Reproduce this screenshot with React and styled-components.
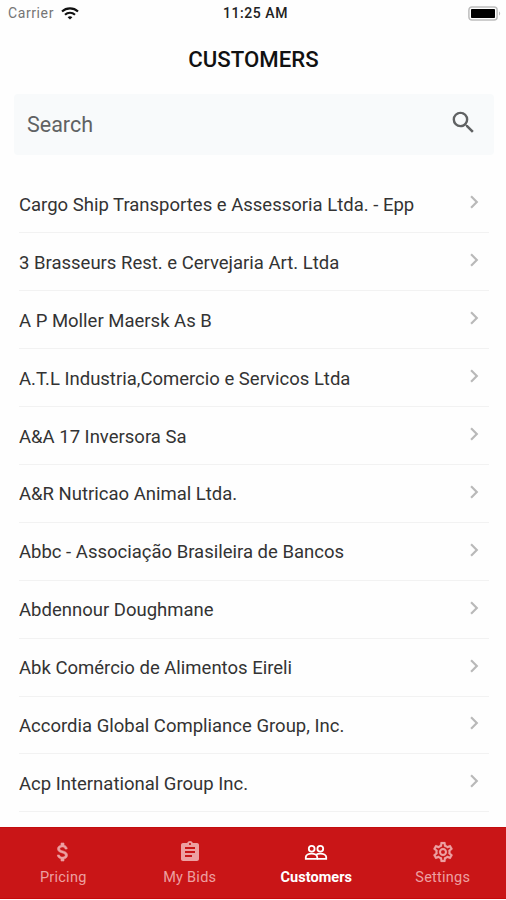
import {useState} from 'react';
import styled, {createGlobalStyle} from 'styled-components';
import {
    MdAssignment,
    MdAttachMoney,
    MdChevronRight,
    MdOutlineSettings,
    MdSearch
} from 'react-icons/md';


const GlobalStyle = createGlobalStyle`
    * {
        box-sizing: border-box;
    }

    body {
        margin: 0;
        background: #fff;
        font-family: Roboto, "Liberation Sans", sans-serif;
    }
`;

const Screen = styled.div`
    display: flex;
    flex-direction: column;
    height: 900px;
    overflow: hidden;
    background: #fefefe;
`;

const StatusBar = styled.div`
    display: grid;
    grid-template-columns: 1fr auto 1fr;
    align-items: center;
    height: 26px;
    padding: 0 5px 0 8px;
    font-size: 14px;
`;

const Carrier = styled.div`
    display: flex;
    align-items: center;
    gap: 7px;
    color: #757575;
    letter-spacing: 0.6px;
`;

const Clock = styled.div`
    color: #222;
    font-weight: 500;
    letter-spacing: 0.55px;
    padding-left: 2px;
`;

const BatteryIcon = styled.svg`
    justify-self: end;
`;

const Title = styled.h1`
    margin: 0;
    height: 68px;
    padding-left: 1px;
    line-height: 67px;
    text-align: center;
    font-size: 22.2px;
    font-weight: 500;
    color: #111;
`;

const SearchBox = styled.label`
    display: flex;
    align-items: center;
    height: 61px;
    margin: 0 12px 0 14px;
    padding: 0 16px 0 13px;
    border-radius: 4px;
    background: #f8fafb;
    color: #606263;

    svg {
        margin-top: -5px;
    }
`;

const SearchInput = styled.input`
    flex: 1;
    min-width: 0;
    padding: 0;
    border: 0;
    outline: 0;
    background: transparent;
    font: 400 21.5px Roboto, sans-serif;
    color: #333;

    &::placeholder {
        color: #606263;
        opacity: 1;
    }
`;

const List = styled.ul`
    flex: 1;
    min-height: 0;
    margin: 0 17px 0 19px;
    padding: 20.5px 0 0;
    list-style: none;
    overflow: hidden;
`;

const CustomerRow = styled.li`
    display: flex;
    align-items: center;
    justify-content: space-between;
    height: 57.9px;
    padding: 2px 2px 0 0;
    border-bottom: 1px solid #f2f2f2;
    font-size: 18.5px;
    color: #333;
    white-space: nowrap;

    svg {
        margin-top: -5px;
        color: #b9b9b9;
    }
`;

const TabBar = styled.nav`
    display: grid;
    grid-template-columns: repeat(4, 1fr);
    height: 72px;
    border-top: 1px solid #c30d0e;
    border-bottom: 1px solid #c8090a;
    margin-bottom: 1px;
    background: #c91517;
`;

const Tab = styled.button`
    display: flex;
    flex-direction: column;
    align-items: center;
    gap: 4px;
    padding: 12px 0 0;
    border: 0;
    background: transparent;
    color: ${({$active}) => ($active ? '#fff' : '#eda0a1')};
    font: ${({$active}) => ($active ? 700 : 400)} 14.5px/20px Roboto, sans-serif;
    letter-spacing: ${({$active}) => ($active ? 0.05 : 0.25)}px;

    path[fill="none"] {
        stroke: none;
    }
`;

const customers = [
    'Cargo Ship Transportes e Assessoria Ltda. - Epp',
    '3 Brasseurs Rest. e Cervejaria Art. Ltda',
    'A P Moller Maersk As B',
    'A.T.L Industria,Comercio e Servicos Ltda',
    'A&A 17 Inversora Sa',
    'A&R Nutricao Animal Ltda.',
    'Abbc - Associação Brasileira de Bancos',
    'Abdennour Doughmane',
    'Abk Comércio de Alimentos Eireli',
    'Accordia Global Compliance Group, Inc.',
    'Acp International Group Inc.'
];

const People = ({size}) => (
    <svg width={size} height={size} viewBox="0 0 24 24" fill="none" stroke="currentColor" strokeWidth="1.8">
        <circle cx="7.7" cy="8.7" r="2.9"/>
        <circle cx="16.3" cy="8.7" r="2.9"/>
        <path d="M1.8 18.9v-1.8c0-2.1 3-3.4 5.8-3.4s5.6 1.3 5.6 3.4v1.8z"/>
        <path d="M12 14.7c1.2-.7 2.9-1 4.4-1 2.8 0 5.8 1.3 5.8 3.4v1.8h-9"/>
    </svg>
);

const Dollar = ({size}) => <MdAttachMoney size={size} strokeWidth="0.6"/>;

const Gear = ({size}) => <MdOutlineSettings size={size} strokeWidth="0.2"/>;

const tabs = [
    {title: 'Pricing', Icon: Dollar},
    {title: 'My Bids', Icon: MdAssignment},
    {title: 'Customers', Icon: People},
    {title: 'Settings', Icon: Gear}
];

const Wifi = () => (
    <svg width="18" height="13" viewBox="0 0 18 13" fill="none" stroke="#111" strokeWidth="2.1">
        <path d="M1 4.6a11.6 11.6 0 0 1 16 0"/>
        <path d="M4 7.8a7.2 7.2 0 0 1 10 0"/>
        <path d="M6.6 10.2a3.6 3.6 0 0 1 4.8 0L9 12.6z" fill="#111" stroke="none"/>
    </svg>
);

const Battery = () => (
    <BatteryIcon width="33" height="15" viewBox="0 0 33 15">
        <rect x="0.9" y="0.9" width="28.2" height="13.2" rx="3" fill="#fff" stroke="#bdbdbd" strokeWidth="1.5"/>
        <rect x="3" y="3" width="24" height="9" rx="0.8" fill="#000"/>
        <path d="M31 5.5c1.6.6 1.6 3.4 0 4z" fill="#bdbdbd"/>
    </BatteryIcon>
);

const App = () => {
    const [query, setQuery] = useState('');
    const [activeTab, setActiveTab] = useState('Customers');

    const found = customers.filter(name => name.toLowerCase().includes(query.toLowerCase()));

    return (
        <>
            <GlobalStyle/>
            <Screen>
                <StatusBar>
                    <Carrier>Carrier <Wifi/></Carrier>
                    <Clock>11:25 AM</Clock>
                    <Battery/>
                </StatusBar>

                <Title>CUSTOMERS</Title>

                <SearchBox>
                    <SearchInput
                        placeholder="Search"
                        value={query}
                        onChange={e => setQuery(e.target.value)}
                    />
                    <MdSearch size={29}/>
                </SearchBox>

                <List>
                    {found.map(name =>
                        <CustomerRow key={name}>
                            {name}
                            <MdChevronRight size={26}/>
                        </CustomerRow>
                    )}
                </List>

                <TabBar>
                    {tabs.map(({title, Icon}) =>
                        <Tab
                            key={title}
                            $active={title === activeTab}
                            onClick={() => setActiveTab(title)}
                        >
                            <Icon size={24}/>
                            {title}
                        </Tab>
                    )}
                </TabBar>
            </Screen>
        </>
    );
};

export default App;
